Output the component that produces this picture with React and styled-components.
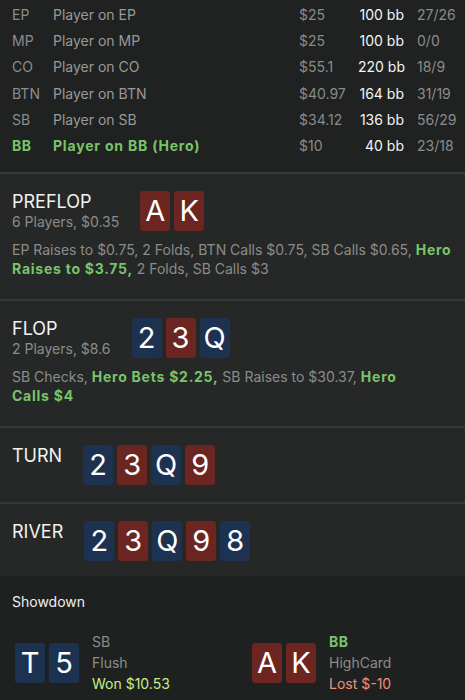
import React from 'react';
import styled, { createGlobalStyle } from 'styled-components';

const Global = createGlobalStyle`
  html, body { margin: 0; padding: 0; background: #1f2220; }
  body {
    font-family: Inter, "Noto Sans", sans-serif;
    -webkit-font-smoothing: antialiased;
  }
`;

const Page = styled.div`
  width: 465px;
  min-height: 700px;
  background: #1f2220;
  overflow: hidden;
`;

const PlayerTable = styled.div`
  padding: 2px 0 13px 12px;
  background: #1f2220;
`;

const PlayerRow = styled.div`
  display: grid;
  grid-template-columns: 41px 246px 59px 46px 1fr;
  height: 26.2px;
  align-items: center;
  font-size: 14px;
  line-height: 18px;
  color: #8c8c8c;
  white-space: nowrap;
`;

const Pos = styled.span`
  color: ${(p) => (p.$hero ? '#79c46a' : '#8c8c8c')};
  font-weight: ${(p) => (p.$hero ? 700 : 400)};
  letter-spacing: ${(p) => (p.$hero ? '0.6px' : '0')};
`;

const Name = styled.span`
  color: ${(p) => (p.$hero ? '#79c46a' : '#999999')};
  font-weight: ${(p) => (p.$hero ? 700 : 400)};
  letter-spacing: ${(p) => (p.$hero ? '0.8px' : '0')};
`;

const Stack = styled.span`
  color: #8a8a8a;
`;

const BB = styled.span`
  color: #f4f4f4;
  text-align: right;
`;

const Ratio = styled.span`
  color: #8c8c8c;
  padding-left: 13px;
`;

const Street = styled.section`
  background: #252826;
  border-top: 2px solid #363937;
  padding: 17px 8px ${(p) => (p.$tight ? '15px' : '17px')} 12px;
`;

const StreetHead = styled.div`
  display: flex;
  align-items: flex-start;
  gap: 21px;
`;

const StreetInfo = styled.div`
  display: flex;
  flex-direction: column;
`;

const StreetName = styled.div`
  font-size: 18px;
  line-height: 22px;
  color: #f2f2f2;
`;

const StreetMeta = styled.div`
  font-size: 14px;
  line-height: 18px;
  color: #8c8c8c;
`;

const Cards = styled.div`
  display: flex;
  gap: 4px;
`;

const Card = styled.div`
  width: 30px;
  height: 40px;
  border-radius: 3px;
  background: ${(p) => (p.$red ? '#6c2520' : '#1d3250')};
  color: #ffffff;
  font-size: 29px;
  line-height: 40px;
  text-align: center;
`;

const Actions = styled.p`
  margin: 9px 0 4px;
  font-size: 14px;
  line-height: 19px;
  color: #8c8c8c;
`;

const HeroAct = styled.b`
  color: #79c46a;
  font-weight: 700;
  letter-spacing: 0.75px;
`;

const Showdown = styled.section`
  background: #1e211f;
  padding: 17px 12px 20px 12px;
`;

const ShowTitle = styled.div`
  font-size: 14px;
  line-height: 18px;
  color: #f0f0f0;
`;

const Results = styled.div`
  display: grid;
  grid-template-columns: 237px 1fr;
  margin-top: 20px;
  padding-left: 3px;
`;

const Result = styled.div`
  display: flex;
  align-items: center;
  gap: 13px;
`;

const ResultInfo = styled.div`
  display: flex;
  flex-direction: column;
  font-size: 14px;
  line-height: 21px;
  color: #8c8c8c;
`;

const Who = styled.span`
  color: ${(p) => (p.$hero ? '#79c46a' : '#8c8c8c')};
  font-weight: ${(p) => (p.$hero ? 700 : 400)};
  letter-spacing: ${(p) => (p.$hero ? '0.6px' : '0')};
`;

const Outcome = styled.span`
  color: ${(p) => (p.$won ? '#c8ee8c' : '#f0907c')};
`;

const players = [
  { pos: 'EP', name: 'Player on EP', stack: '$25', bb: '100 bb', ratio: '27/26' },
  { pos: 'MP', name: 'Player on MP', stack: '$25', bb: '100 bb', ratio: '0/0' },
  { pos: 'CO', name: 'Player on CO', stack: '$55.1', bb: '220 bb', ratio: '18/9' },
  { pos: 'BTN', name: 'Player on BTN', stack: '$40.97', bb: '164 bb', ratio: '31/19' },
  { pos: 'SB', name: 'Player on SB', stack: '$34.12', bb: '136 bb', ratio: '56/29' },
  { pos: 'BB', name: 'Player on BB (Hero)', stack: '$10', bb: '40 bb', ratio: '23/18', hero: true },
];

const C = ({ v, r }) => <Card $red={r}>{v}</Card>;

const board = [
  ['2', false],
  ['3', true],
  ['Q', false],
  ['9', true],
  ['8', false],
];

const Board = ({ n }) => (
  <Cards>
    {board.slice(0, n).map(([v, r], i) => (
      <C key={i} v={v} r={r} />
    ))}
  </Cards>
);

export default function App() {
  return (
    <Page>
      <Global />
      <PlayerTable>
        {players.map((p) => (
          <PlayerRow key={p.pos}>
            <Pos $hero={p.hero}>{p.pos}</Pos>
            <Name $hero={p.hero}>{p.name}</Name>
            <Stack>{p.stack}</Stack>
            <BB>{p.bb}</BB>
            <Ratio>{p.ratio}</Ratio>
          </PlayerRow>
        ))}
      </PlayerTable>

      <Street>
        <StreetHead>
          <StreetInfo>
            <StreetName>PREFLOP</StreetName>
            <StreetMeta>6 Players, $0.35</StreetMeta>
          </StreetInfo>
          <Cards>
            <C v="A" r />
            <C v="K" r />
          </Cards>
        </StreetHead>
        <Actions>
          EP Raises to $0.75, 2 Folds, BTN Calls $0.75, SB Calls $0.65,{' '}
          <HeroAct>Hero Raises to $3.75,</HeroAct> 2 Folds, SB Calls $3
        </Actions>
      </Street>

      <Street>
        <StreetHead>
          <StreetInfo>
            <StreetName>FLOP</StreetName>
            <StreetMeta>2 Players, $8.6</StreetMeta>
          </StreetInfo>
          <Board n={3} />
        </StreetHead>
        <Actions>
          SB Checks, <HeroAct>Hero Bets $2.25,</HeroAct> SB Raises to $30.37,{' '}
          <HeroAct>Hero Calls&nbsp;$4</HeroAct>
        </Actions>
      </Street>

      <Street>
        <StreetHead>
          <StreetInfo>
            <StreetName>TURN</StreetName>
          </StreetInfo>
          <Board n={4} />
        </StreetHead>
      </Street>

      <Street $tight>
        <StreetHead>
          <StreetInfo>
            <StreetName>RIVER</StreetName>
          </StreetInfo>
          <Board n={5} />
        </StreetHead>
      </Street>

      <Showdown>
        <ShowTitle>Showdown</ShowTitle>
        <Results>
          <Result>
            <Cards>
              <C v="T" />
              <C v="5" />
            </Cards>
            <ResultInfo>
              <Who>SB</Who>
              <span>Flush</span>
              <Outcome $won>Won $10.53</Outcome>
            </ResultInfo>
          </Result>
          <Result>
            <Cards>
              <C v="A" r />
              <C v="K" r />
            </Cards>
            <ResultInfo>
              <Who $hero>BB</Who>
              <span>HighCard</span>
              <Outcome>Lost $-10</Outcome>
            </ResultInfo>
          </Result>
        </Results>
      </Showdown>
    </Page>
  );
}
